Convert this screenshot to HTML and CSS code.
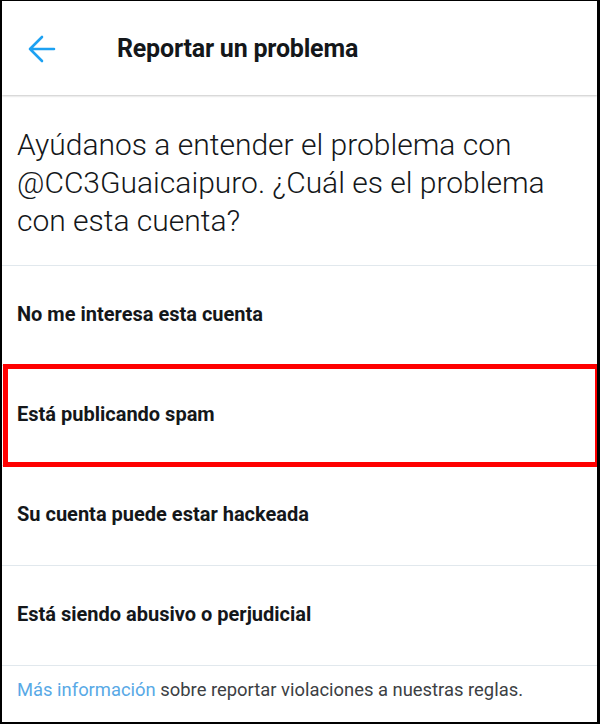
FILE: index.html
```html
<!DOCTYPE html>
<html lang="es">
<head>
<meta charset="utf-8">
<link rel="stylesheet" href="styles.css">
</head>
<body>
<div class="frame">
  <header class="topbar">
    <svg class="back" width="30" height="28" viewBox="0 0 30 28" aria-hidden="true">
      <path d="M28 14 H4 M16 2 L4 14 L16 26" fill="none" stroke="#1da1f2" stroke-width="2.6" stroke-linecap="round" stroke-linejoin="round"/>
    </svg>
    <h1 class="title">Reportar un problema</h1>
  </header>
  <p class="question">Ayúdanos a entender el problema con @CC3Guaicaipuro. ¿Cuál es el problema con esta cuenta?</p>
  <ul class="options">
    <li class="option">No me interesa esta cuenta</li>
    <li class="option marked">Está publicando spam</li>
    <li class="option">Su cuenta puede estar hackeada</li>
    <li class="option">Está siendo abusivo o perjudicial</li>
  </ul>
  <p class="footer"><a class="link" href="#">Más información</a> sobre reportar violaciones a nuestras reglas.</p>
</div>
</body>
</html>
```

FILE: styles.css
```css
* { box-sizing: border-box; }
html, body { margin: 0; padding: 0; }
body {
  width: 600px;
  height: 724px;
  font-family: Roboto, "Liberation Sans", sans-serif;
  background: #fff;
}
.frame {
  width: 600px;
  height: 724px;
  border-style: solid;
  border-color: #000;
  border-width: 1px 3px 2px 2px;
  background: #fff;
  display: flex;
  flex-direction: column;
  overflow: hidden;
}
.topbar {
  height: 94px;
  flex: none;
  display: flex;
  align-items: center;
  padding-left: 24px;
  box-shadow: 0 1px 2px rgba(0,0,0,0.22);
  position: relative;
  z-index: 1;
}
.back { flex: none; margin-top: 2px; }
.title {
  margin: 0 0 0 61px;
  font-size: 25px;
  font-weight: 700;
  color: #14171a;
  letter-spacing: -0.2px;
}
.question {
  margin: 0;
  padding: 31px 15px 25px 15px;
  font-size: 30px;
  font-weight: 300;
  line-height: 38px;
  color: #14171a;
  border-bottom: 1px solid #e1e8ed;
}
.options {
  list-style: none;
  margin: 0;
  padding: 0;
}
.option {
  height: 100px;
  display: flex;
  align-items: center;
  padding: 0 0 4px 15px;
  font-size: 20px;
  font-weight: 700;
  color: #14171a;
  border-bottom: 1px solid #e1e8ed;
  position: relative;
}
.option.marked::after {
  content: "";
  position: absolute;
  left: 1px;
  right: -3px;
  top: -2px;
  bottom: -2px;
  border: 5px solid #ff0000;
}
.footer {
  margin: 0;
  padding: 13px 15px 0 15px;
  font-size: 18.4px;
  color: #3c4043;
}
.link {
  color: #58a9e6;
  text-decoration: none;
}
```
